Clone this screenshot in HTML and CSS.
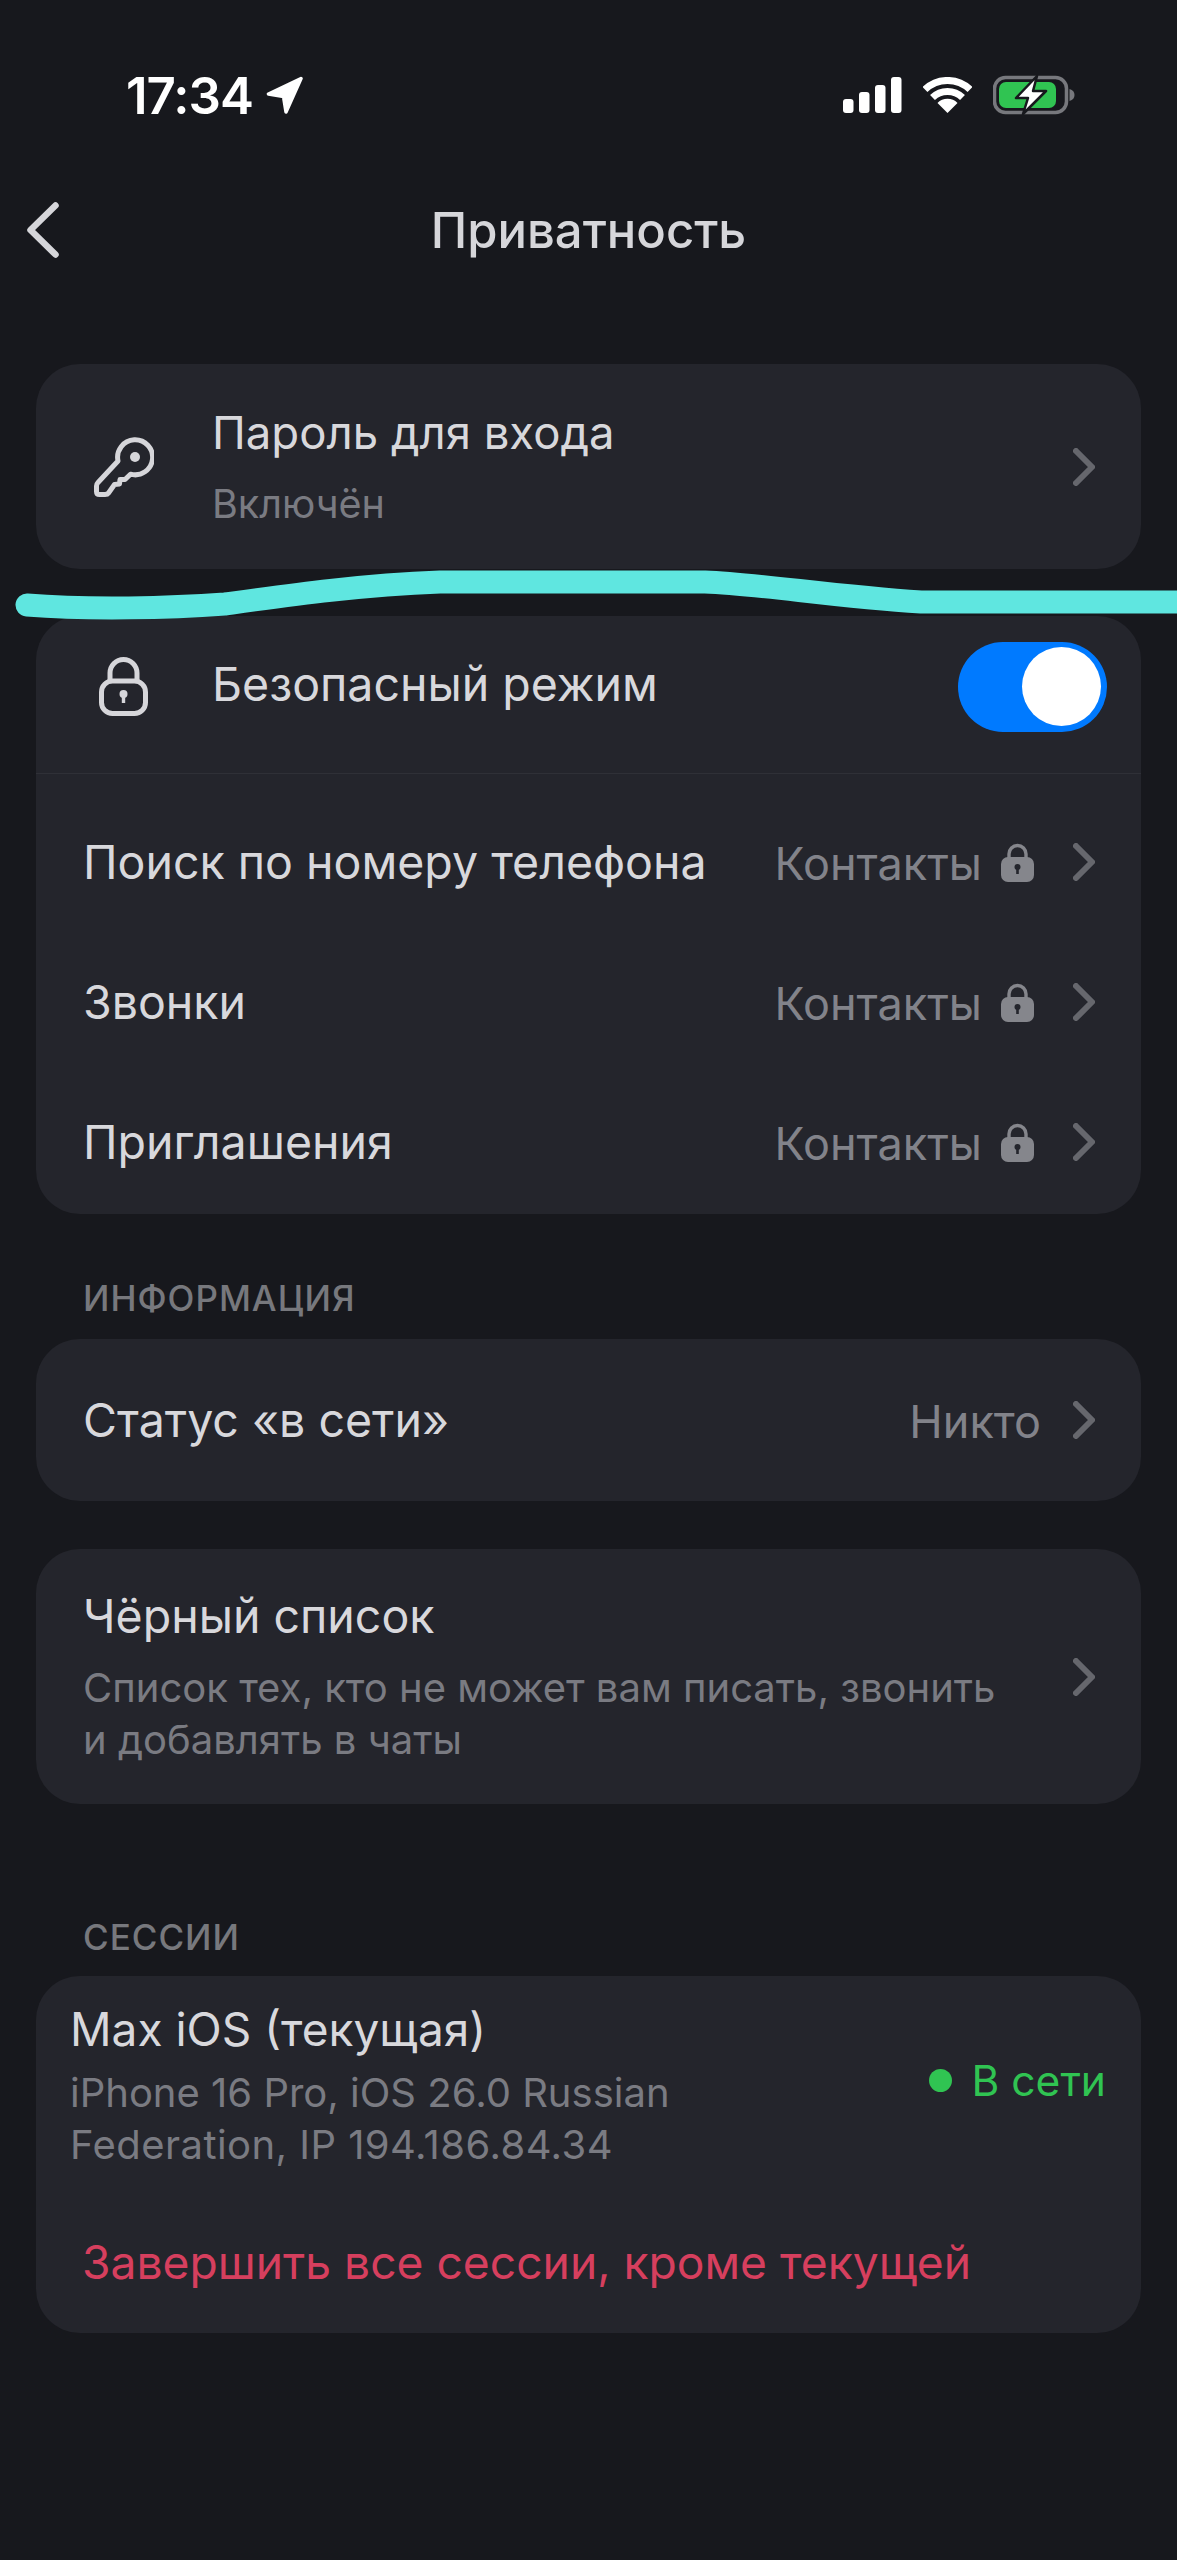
FILE: index.html
```html
<!DOCTYPE html>
<html lang="ru">
<head>
    <meta charset="UTF-8">
    <meta name="viewport" content="width=device-width, initial-scale=1.0">
    <title>Приватность</title>
    <link rel="stylesheet" href="styles.css">
</head>
<body>
    <div class="screen">
        <div class="status-bar">
            <div class="status-left">
                <span class="time">17:34</span>
                <svg class="icon-nav" viewBox="0 0 37 38"><path d="M35 2.5 L2.5 18 L17.5 20.5 L20 36 Z" fill="#fff" stroke="#fff" stroke-width="3.5" stroke-linejoin="round"/></svg>
            </div>
            <div class="status-right">
                <svg class="icon-signal" viewBox="0 0 59 36" fill="#fff">
                    <rect x="0" y="22" width="10.5" height="14" rx="3"/>
                    <rect x="16" y="15" width="10.5" height="21" rx="3"/>
                    <rect x="32" y="8" width="10.5" height="28" rx="3"/>
                    <rect x="48" y="0" width="10.5" height="36" rx="3"/>
                </svg>
                <svg class="icon-wifi" viewBox="0 0 49 36" fill="none" stroke="#fff" stroke-width="7">
                    <path d="M2 12.5 A32.5 32.5 0 0 1 47 12.5"/>
                    <path d="M9.5 20.6 A21.5 21.5 0 0 1 39.5 20.6"/>
                    <path d="M24.5 36 L14.5 26 A14 14 0 0 1 34.5 26 Z" fill="#fff" stroke="none"/>
                </svg>
                <svg class="icon-battery" viewBox="0 0 82 40">
                    <rect x="1.5" y="2.5" width="72" height="35" rx="11" fill="none" stroke="#77787d" stroke-width="3.5"/>
                    <rect x="6" y="7" width="57" height="26" rx="7" fill="#30c452"/>
                    <path d="M76.5 14 C80 15 81.5 17 81.5 20 C81.5 23 80 25 76.5 26 Z" fill="#77787d"/>
                    <path d="M44 1 L23 23 L35 23 L30 39 L53 16 L40 16 Z" fill="#fff" stroke="#17181d" stroke-width="2.5" stroke-linejoin="round"/>
                </svg>
            </div>
        </div>

        <div class="nav-bar">
            <svg class="icon-back" viewBox="0 0 32 56" fill="none" stroke="#d6d6da" stroke-width="6.5" stroke-linecap="round" stroke-linejoin="round"><path d="M28.5 3.5 L3.5 28 L28.5 52.5"/></svg>
            <h1 class="nav-title">Приватность</h1>
        </div>

        <div class="content">
            <div class="card card-password">
                <div class="row row-icon">
                    <svg class="icon-key" viewBox="0 0 60 60" fill="none" stroke="#d6d6da" stroke-width="5" stroke-linejoin="round">
                        <path d="M24 24 A17.5 17.5 0 1 1 36.5 37.2 L31 42.5 L26 42.5 L25.5 47 L20.5 47.5 L14.5 56 Q13.5 57.5 11 57.5 L5.5 57.5 Q2.5 57.5 2.5 54.5 L2.5 49 Q2.5 47 4 45.5 Z"/>
                        <circle cx="41" cy="20" r="5" fill="#d6d6da" stroke="none"/>
                    </svg>
                    <div class="row-text">
                        <div class="row-title">Пароль для входа</div>
                        <div class="row-sub">Включён</div>
                    </div>
                    <svg class="chevron" viewBox="0 0 22 38"><path d="M3 3 L19 19 L3 35"/></svg>
                </div>
            </div>

            <div class="card card-safe">
                <div class="row row-safe">
                    <svg class="icon-lock" viewBox="0 0 49 59" fill="none" stroke="#d6d6da" stroke-width="5">
                        <rect x="2.5" y="24" width="44" height="32.5" rx="11"/>
                        <path d="M11 24 V16 a13.5 13.5 0 0 1 27 0 V24"/>
                        <circle cx="24.5" cy="37" r="4" fill="#d6d6da" stroke="none"/>
                        <rect x="22.8" y="37" width="3.4" height="9" fill="#d6d6da" stroke="none"/>
                    </svg>
                    <div class="row-title row-grow">Безопасный режим</div>
                    <div class="toggle"><div class="toggle-knob"></div></div>
                </div>
                <div class="rows">
                    <div class="row row-plain">
                        <div class="row-title row-grow">Поиск по номеру телефона</div>
                        <span class="row-value">Контакты</span>
                        <svg class="icon-small-lock" viewBox="0 0 33 39">
                            <path d="M8 17 V11 a8.5 8.5 0 0 1 17 0 V17" fill="none" stroke="#85868c" stroke-width="3.4"/>
                            <rect x="0" y="14" width="33" height="25" rx="7" fill="#85868c"/>
                            <circle cx="16.5" cy="24" r="3" fill="#24252c"/>
                            <rect x="15.2" y="24" width="2.6" height="7" fill="#24252c"/>
                        </svg>
                        <svg class="chevron" viewBox="0 0 22 38"><path d="M3 3 L19 19 L3 35"/></svg>
                    </div>
                    <div class="row row-plain">
                        <div class="row-title row-grow">Звонки</div>
                        <span class="row-value">Контакты</span>
                        <svg class="icon-small-lock" viewBox="0 0 33 39">
                            <path d="M8 17 V11 a8.5 8.5 0 0 1 17 0 V17" fill="none" stroke="#85868c" stroke-width="3.4"/>
                            <rect x="0" y="14" width="33" height="25" rx="7" fill="#85868c"/>
                            <circle cx="16.5" cy="24" r="3" fill="#24252c"/>
                            <rect x="15.2" y="24" width="2.6" height="7" fill="#24252c"/>
                        </svg>
                        <svg class="chevron" viewBox="0 0 22 38"><path d="M3 3 L19 19 L3 35"/></svg>
                    </div>
                    <div class="row row-plain">
                        <div class="row-title row-grow">Приглашения</div>
                        <span class="row-value">Контакты</span>
                        <svg class="icon-small-lock" viewBox="0 0 33 39">
                            <path d="M8 17 V11 a8.5 8.5 0 0 1 17 0 V17" fill="none" stroke="#85868c" stroke-width="3.4"/>
                            <rect x="0" y="14" width="33" height="25" rx="7" fill="#85868c"/>
                            <circle cx="16.5" cy="24" r="3" fill="#24252c"/>
                            <rect x="15.2" y="24" width="2.6" height="7" fill="#24252c"/>
                        </svg>
                        <svg class="chevron" viewBox="0 0 22 38"><path d="M3 3 L19 19 L3 35"/></svg>
                    </div>
                </div>
            </div>

            <div class="section-label label-info">ИНФОРМАЦИЯ</div>
            <div class="card">
                <div class="row row-status">
                    <div class="row-title row-grow">Статус «в сети»</div>
                    <span class="row-value">Никто</span>
                    <svg class="chevron" viewBox="0 0 22 38"><path d="M3 3 L19 19 L3 35"/></svg>
                </div>
            </div>

            <div class="card card-black">
                <div class="row row-black">
                    <div class="row-text row-grow">
                        <div class="row-title">Чёрный список</div>
                        <div class="row-desc">Список тех, кто не может вам писать, звонить<br>и добавлять в чаты</div>
                    </div>
                    <svg class="chevron" viewBox="0 0 22 38"><path d="M3 3 L19 19 L3 35"/></svg>
                </div>
            </div>

            <div class="section-label label-sessions">СЕССИИ</div>
            <div class="card card-session">
                <div class="session">
                    <div class="session-text">
                        <div class="row-title">Max iOS (текущая)</div>
                        <div class="row-desc">iPhone 16 Pro, iOS 26.0 Russian<br><span class="session-ip">Federation, IP 194.186.84.34</span></div>
                    </div>
                    <div class="online"><span class="online-dot"></span>В сети</div>
                </div>
                <div class="end-sessions">Завершить все сессии, кроме текущей</div>
            </div>
        </div>

        <!-- hand drawn marker line over the screenshot -->
        <svg class="marker" viewBox="0 0 1177 640" fill="none">
            <path d="M27 605 C90 610 170 608 225 604 C290 595 360 585 440 582 L705 582 C760 584 830 596 921 602 L1177 602" stroke="#5fe6e0" stroke-width="23" stroke-linecap="round"/>
        </svg>
    </div>
</body>
</html>
```

FILE: styles.css
```css
* {
    box-sizing: border-box;
}

body {
    margin: 0;
    background: #17181d;
    font-family: Inter, "Liberation Sans", sans-serif;
    color: #d8d8dc;
}

.screen {
    position: relative;
    width: 1177px;
    height: 2560px;
    overflow: hidden;
}

.status-bar {
    height: 190px;
    padding: 0 102px 0 126px;
    display: flex;
    align-items: center;
    justify-content: space-between;
}

.status-left {
    display: flex;
    align-items: center;
    gap: 13px;
}

.status-right {
    display: flex;
    align-items: center;
    gap: 21px;
}

.time {
    font-size: 51px;
    font-weight: 600;
    color: #fff;
    letter-spacing: -1px;
}

.icon-nav {
    width: 37px;
    height: 38px;
}

.icon-signal {
    width: 59px;
    height: 36px;
}

.icon-wifi {
    width: 49px;
    height: 36px;
}

.icon-battery {
    width: 82px;
    height: 40px;
}

.nav-bar {
    position: relative;
    height: 80px;
    display: flex;
    align-items: center;
    justify-content: center;
}

.icon-back {
    position: absolute;
    left: 27px;
    top: 12px;
    width: 32px;
    height: 56px;
}

.nav-title {
    margin: 0;
    font-size: 49px;
    font-weight: 500;
    color: #d6d6da;
}

.content {
    padding: 94px 36px 0;
}

.card {
    background: #24252c;
    border-radius: 44px;
}

.card-password {
    height: 205px;
}

.card-safe {
    margin-top: 47px;
    height: 598px;
}

.card-black {
    margin-top: 48px;
    height: 255px;
}

.card-session {
    height: 357px;
    padding: 0 34px;
}

.row {
    display: flex;
    align-items: center;
    padding: 0 46px 0 47px;
}

.row-icon {
    height: 205px;
    padding-left: 58px;
}

.row-icon .row-title {
    font-size: 45.5px;
}

.row-grow {
    flex: 1;
}

.row-title {
    font-size: 46.5px;
    line-height: 56px;
    color: #d8d8dc;
}

.row-sub {
    margin-top: 18px;
    font-size: 39.5px;
    line-height: 50px;
    color: #7a7b82;
}

.row-desc {
    margin-top: 18px;
    font-size: 40px;
    line-height: 52px;
    color: #7a7b82;
}

.row-value {
    font-size: 45px;
    color: #82838a;
    position: relative;
    top: 1px;
}

.chevron {
    width: 22px;
    height: 38px;
    fill: none;
    stroke: #66676d;
    stroke-width: 6;
    stroke-linecap: round;
    stroke-linejoin: round;
}

.icon-key {
    width: 60px;
    height: 60px;
    margin-right: 58px;
}

.row-text {
    flex: 1;
}

.row-safe {
    height: 158px;
    padding: 0 34px 16px 63px;
    border-bottom: 1px solid #2f3037;
}

.row-safe .row-title {
    margin-bottom: 6px;
}

.icon-lock {
    width: 49px;
    height: 59px;
    margin-right: 64px;
}

.toggle {
    width: 149px;
    height: 90px;
    padding: 5px 6px;
    display: flex;
    justify-content: flex-end;
    background: #007aff;
    border-radius: 45px;
}

.toggle-knob {
    width: 79px;
    height: 79px;
    background: #fff;
    border-radius: 50%;
}

.rows {
    padding-top: 18px;
}

.row-plain {
    height: 140px;
}

.icon-small-lock {
    width: 33px;
    height: 39px;
    margin: 0 39px 0 19px;
}

.row-status {
    height: 162px;
}

.row-status .chevron {
    margin-left: 32px;
}

.row-black {
    height: 255px;
}

.section-label {
    padding-left: 47px;
    font-size: 35px;
    font-weight: 500;
    line-height: 40px;
    letter-spacing: 1px;
    color: #77787d;
}

.label-info {
    padding-top: 64px;
    padding-bottom: 21px;
}

.label-sessions {
    padding-top: 113px;
    padding-bottom: 19px;
}

.session {
    padding-top: 25px;
    display: flex;
    align-items: center;
    justify-content: space-between;
}

.session .row-title {
    font-size: 46px;
}

.session .row-desc {
    margin-top: 10px;
}

.session-ip {
    letter-spacing: 0.45px;
}

.online {
    display: flex;
    align-items: center;
    margin-right: 1px;
    margin-bottom: 12px;
    font-size: 42.5px;
    color: #30c452;
}

.online-dot {
    width: 23px;
    height: 23px;
    margin-right: 20px;
    background: #30c452;
    border-radius: 50%;
}

.end-sessions {
    margin-top: 63px;
    padding-left: 12px;
    font-size: 46.2px;
    line-height: 56px;
    color: #d63f5e;
}

.marker {
    position: absolute;
    top: 0;
    left: 0;
    width: 1177px;
    height: 640px;
}
```
